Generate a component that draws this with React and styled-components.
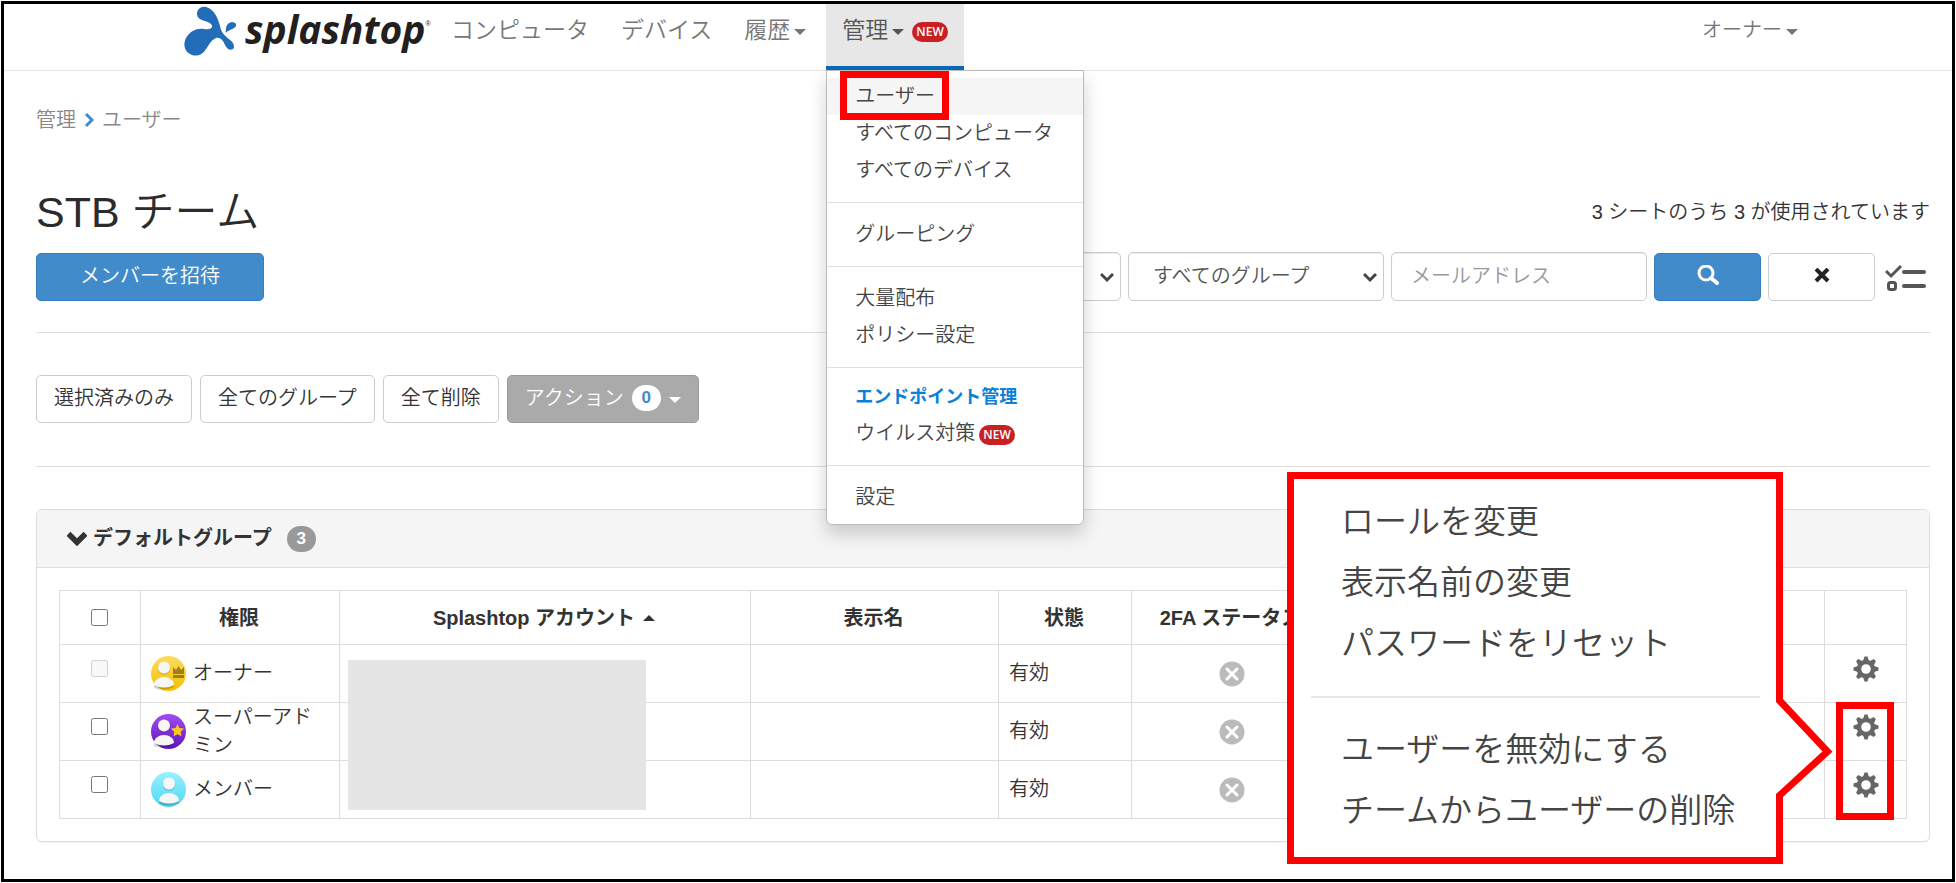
import React from 'react';
import styled, {createGlobalStyle, css} from 'styled-components';

const GlobalStyle = createGlobalStyle`
    *, *::before, *::after {
        box-sizing: border-box;
    }

    body {
        margin: 0;
        background: #fff;
        color: #333;
        font-family: "Liberation Sans", "Noto Sans CJK JP", sans-serif;
        font-size: 20px;
        font-weight: 350;
        line-height: 28px;
    }

    button, input, select {
        font: inherit;
        color: inherit;
    }
`;

const Page = styled.div`
    position: relative;
    display: flex;
    flex-direction: column;
    margin: 1px;
    min-height: calc(100vh - 2px);
    border: 3px solid #000;
`;

const Header = styled.header`
    display: flex;
    height: 67px;
    padding: 0 138px 0 180px;
    border-bottom: 1px solid #e7e7e7;
`;

const Logo = styled.a`
    display: flex;
    align-items: flex-start;
    padding-top: 2px;
    width: 251px;
    color: #231f20;
    text-decoration: none;
`;

const LogoMark = styled.svg`
    flex: none;
    width: 54px;
    height: 50px;
`;

const LogoText = styled.span`
    padding: 3px 0 0 7px;
    font-family: "Open Sans", sans-serif;
    font-size: 39px;
    font-style: italic;
    font-weight: 700;
    line-height: 40px;
`;

const LogoMarkSign = styled.sup`
    padding-top: 14px;
    font-size: 7px;
    line-height: 8px;
`;

const Nav = styled.nav`
    display: flex;
    flex: 1;
`;

const NavItem = styled.div`
    position: relative;
    display: flex;
    margin-left: ${props => props.$end ? 'auto' : props.$active ? '4px' : '0'};
`;

const NavLink = styled.a`
    display: flex;
    align-items: center;
    gap: 4px;
    padding: 0 16px 10px;
    border-bottom: 4px solid ${props => props.$active ? '#0d6ab7' : 'transparent'};
    background: ${props => props.$active ? '#e7e7e7' : 'transparent'};
    color: ${props => props.$active ? '#555' : '#777'};
    font-size: ${props => props.$small ? '20px' : '23px'};
    text-decoration: none;
    white-space: nowrap;
`;

const Caret = styled.span`
    width: 0;
    height: 0;
    margin-top: ${props => props.$up ? '0' : '4px'};
    border: 6px solid transparent;
    ${props => props.$up
        ? css`border-top: 0; border-bottom-color: currentColor;`
        : css`border-bottom: 0; border-top-color: currentColor;`}
`;

const NewBadge = styled.span`
    margin: 4px 0 0 4px;
    padding: 0 4px;
    border-radius: 10px;
    background: #c92026;
    color: #fff;
    font-family: "Open Sans", sans-serif;
    font-size: 12px;
    font-weight: 600;
    line-height: 20px;
`;

const Menu = styled.ul`
    position: absolute;
    top: 66px;
    left: 0;
    z-index: 2;
    width: 258px;
    margin: 0;
    padding: 7px 0 8px;
    border: 1px solid #bbb;
    border-radius: 0 0 6px 6px;
    background: #fff;
    box-shadow: 0 9px 18px rgba(0, 0, 0, 0.18);
    list-style: none;
`;

const MenuLink = styled.a`
    display: flex;
    align-items: center;
    height: ${props => props.$strong ? '34px' : '37px'};
    padding: 0 0 2px 28px;
    background: ${props => props.$active ? '#f5f5f5' : 'transparent'};
    color: ${props => props.$strong ? '#0a80d8' : '#444'};
    font-size: ${props => props.$strong ? '18px' : '20px'};
    font-weight: ${props => props.$strong ? '700' : '350'};
    text-decoration: none;
`;

const MenuDivider = styled.li`
    height: 1px;
    margin: 13px 0;
    background: #e0e0e0;
`;

const RedOutline = styled.span`
    position: absolute;
    border: 7px solid #f00;
    pointer-events: none;
`;

const MenuOutline = styled(RedOutline)`
    top: 0;
    left: 13px;
    width: 109px;
    height: 49px;
`;

const Main = styled.main`
    padding: 35px 22px 0 32px;
`;

const Breadcrumb = styled.nav`
    display: flex;
    align-items: center;
    gap: 8px;
    color: #888;

    a {
        color: inherit;
        text-decoration: none;
    }
`;

const TitleRow = styled.div`
    display: flex;
    align-items: center;
    justify-content: space-between;
    height: 64px;
    margin-top: 46px;
`;

const Title = styled.h1`
    margin: 0;
    color: #2b2b2b;
    font-size: 43px;
    font-weight: 350;
    line-height: 60px;
`;

const Toolbar = styled.div`
    display: flex;
    align-items: center;
    margin-top: 8px;
`;

const Filters = styled.form`
    display: flex;
    align-items: center;
    gap: 7px;
    margin-left: auto;
`;

const Button = styled.button`
    display: flex;
    align-items: center;
    justify-content: center;
    gap: 8px;
    width: ${props => props.$width || 'auto'};
    height: 48px;
    padding: 0 17px 2px;
    border: 1px solid #ccc;
    border-radius: 5px;
    background: #fff;
    color: #333;
    white-space: nowrap;

    ${props => props.$primary && css`
        border-color: #357ebd;
        background: #428bca;
        color: #fff;
    `}

    ${props => props.$muted && css`
        border-color: #999;
        background: #aaa;
        color: #fff;
    `}
`;

const SelectBox = styled.span`
    position: relative;
    display: flex;
    width: 256px;

    svg {
        position: absolute;
        top: 18px;
        right: 7px;
        pointer-events: none;
    }
`;

const field = css`
    width: 256px;
    height: 49px;
    padding: 0 19px 1px;
    border: 1px solid #ccc;
    border-radius: 5px;
    background: #fff;
    box-shadow: inset 0 1px 1px rgba(0, 0, 0, 0.08);
`;

const Select = styled.select`
    ${field}
    padding-left: 24px;
    color: #555;
    appearance: none;
`;

const TextInput = styled.input`
    ${field}

    &::placeholder {
        color: #999;
        opacity: 1;
    }
`;

const IconButton = styled.button`
    display: flex;
    padding: 4px 3px 0;
    border: 0;
    background: none;
    color: #555;
`;

const Rule = styled.hr`
    height: 1px;
    margin: ${props => props.$top} 0 0;
    border: 0;
    background: #ddd;
`;

const ActionRow = styled.div`
    display: flex;
    gap: 8px;
    margin-top: 42px;
`;

const Count = styled.span`
    display: inline-flex;
    align-items: center;
    justify-content: center;
    width: 29px;
    height: 26px;
    border-radius: 13px;
    background: ${props => props.$dark ? '#999' : '#fff'};
    color: ${props => props.$dark ? '#fff' : '#428bca'};
    font-size: 17px;
    font-weight: 700;
`;

const Panel = styled.section`
    position: relative;
    margin-top: 42px;
    border: 1px solid #ddd;
    border-radius: 6px;
    box-shadow: 0 1px 1px rgba(0, 0, 0, 0.05);
`;

const PanelHead = styled.h2`
    display: flex;
    align-items: center;
    gap: 6px;
    height: 58px;
    margin: 0;
    padding: 0 0 2px 30px;
    border-bottom: 1px solid #ddd;
    border-radius: 5px 5px 0 0;
    background: #f5f5f5;
    font-size: 20px;
    font-weight: 700;

    ${Count} {
        margin: 2px 0 0 9px;
    }
`;

const PanelBody = styled.div`
    padding: 22px;
`;

const Table = styled.table`
    width: 100%;
    border-collapse: collapse;
    table-layout: fixed;
`;

const Th = styled.th`
    height: 54px;
    padding: 0 2px 0 0;
    border: 1px solid #ddd;
    font-weight: 700;
    white-space: nowrap;
`;

const Td = styled.td`
    position: relative;
    height: 58px;
    padding: 0 10px;
    border: 1px solid #ddd;
    text-align: ${props => props.$center ? 'center' : 'left'};
`;

const CellText = styled.span`
    display: block;
    padding-bottom: 1px;
`;

const HeadLabel = styled.span`
    display: flex;
    align-items: center;
    justify-content: center;
    gap: 8px;
`;

const Checkbox = styled.input`
    display: block;
    width: 17px;
    height: 17px;
    margin: ${props => props.$head ? '0 auto' : '0 21px 11px'};
`;

const Role = styled.span`
    display: flex;
    align-items: center;
    gap: 7px;

    svg {
        flex: none;
    }
`;

const Redacted = styled.span`
    position: absolute;
    top: 15px;
    left: 8px;
    z-index: 1;
    width: 298px;
    height: 150px;
    background: #e5e5e5;
`;

const GearButton = styled.button`
    display: inline-flex;
    padding: 0 0 10px;
    border: 0;
    background: none;
    color: #666;
`;

const GearOutline = styled(RedOutline)`
    top: -1px;
    left: 11px;
    z-index: 1;
    width: 58px;
    height: 118px;
`;

const Callout = styled.div`
    position: absolute;
    top: -38px;
    right: 96px;
    z-index: 1;
    width: 546px;
    height: 392px;
    padding: 19px 73px 0 24px;
`;

const CalloutShape = styled.svg`
    position: absolute;
    top: 0;
    left: 0;
`;

const CalloutList = styled.ul`
    position: relative;
    margin: 0;
    padding: 0;
    list-style: none;
`;

const CalloutLink = styled.a`
    display: block;
    padding-left: 30px;
    color: #444;
    font-size: 33px;
    line-height: 61px;
    text-decoration: none;
    white-space: nowrap;
`;

const CalloutDivider = styled.li`
    height: 2px;
    margin: 22px 0 21px;
    background: #e5e5e5;
`;

const menuGroups = [
    [
        {label: 'ユーザー', active: true},
        {label: 'すべてのコンピュータ'},
        {label: 'すべてのデバイス'},
    ],
    [{label: 'グルーピング'}],
    [{label: '大量配布'}, {label: 'ポリシー設定'}],
    [
        {label: 'エンドポイント管理', strong: true},
        {label: 'ウイルス対策', isNew: true},
    ],
    [{label: '設定'}],
];

const calloutGroups = [
    ['ロールを変更', '表示名前の変更', 'パスワードをリセット'],
    ['ユーザーを無効にする', 'チームからユーザーの削除'],
];

const members = [
    {role: 'オーナー', kind: 'owner', disabled: true},
    {role: 'スーパーアドミン', kind: 'admin'},
    {role: 'メンバー', kind: 'member'},
];

const avatarColors = {
    owner: ['#fbdc62', '#f5c000'],
    admin: ['#a04df5', '#6015b8'],
    member: ['#9af0ff', '#4fd8f2'],
};

function SplashMark() {
    return (
        <LogoMark viewBox="0 0 54 50" aria-hidden="true">
            <path
                fill="#226db8"
                d="M13 8C13 3 17 0 22 1C30 3 34 12 36 20C37 26 40 29 46 34C50 37 51 41 49 43C46 45 43 43 41 39C39 34 36 31 32 32C27 34 25 39 22 43C18 50 11 51 6 48C0 45 -1 38 2 32C6 25 13 22 20 23C26 24 30 22 27 18C23 14 13 15 13 8Z"
            />
            <path fill="#226db8" d="M42 27C41 21 43 17 48 16C52 16 54 20 50 22C47 24 44 24 42 27Z"/>
        </LogoMark>
    );
}

function Avatar({kind}) {
    const [light, dark] = avatarColors[kind];
    const x = kind === 'member' ? 18 : 13;
    return (
        <svg width="35" height="35" viewBox="0 0 35 35" aria-hidden="true">
            <defs>
                <linearGradient id={`bg-${kind}`} x1="0" y1="0" x2="0" y2="1">
                    <stop offset="0" stopColor={light}/>
                    <stop offset="1" stopColor={dark}/>
                </linearGradient>
            </defs>
            <circle cx="17.5" cy="17.5" r="17.5" fill={`url(#bg-${kind})`}/>
            <path
                d={`M${x - 10} 32C${x - 10} 25 ${x - 6} 22 ${x} 22S${x + 10} 25 ${x + 10} 31Q${x} 36 ${x - 10} 32Z`}
                fill="#000"
                opacity="0.18"
            />
            <path
                d={`M${x - 10} 29C${x - 10} 24 ${x - 5} 21 ${x} 21S${x + 10} 24 ${x + 10} 29Q${x} 34 ${x - 10} 29Z`}
                fill="#f7f7f7"
            />
            <circle cx={x} cy="12.5" r="6.500" fill="#000" opacity="0.12"/>
            <circle cx={x} cy="11.5" r="6" fill="#f7f7f7"/>
            {kind === 'owner' && (
                <path d="M22 11L25 14L27.500 10L30 14L33 11V18H22ZM22 19H33V22H22Z" fill="#8a6a12" opacity="0.800"/>
            )}
            {kind === 'admin' && (
                <path
                    d="M26.500 10L28.400 14L33 14.600L29.700 17.800L30.500 22.300L26.500 20.200L22.500 22.300L23.300 17.800L20 14.600L24.600 14Z"
                    fill="#fcc61e"
                />
            )}
        </svg>
    );
}

function Chevron({size = 14, color = '#444', width = 3}) {
    return (
        <svg width={size} height={size} viewBox="0 0 14 14" aria-hidden="true">
            <path d="M1 4L7 10L13 4" fill="none" stroke={color} strokeWidth={width}/>
        </svg>
    );
}

function Separator() {
    return (
        <svg width="10" height="14" viewBox="0 0 10 14" aria-hidden="true">
            <path d="M2 1L8 7L2 13" fill="none" stroke="#428bca" strokeWidth="3"/>
        </svg>
    );
}

function GearIcon() {
    const teeth = [0, 45, 90, 135, 180, 225, 270, 315];
    return (
        <svg width="26" height="26" viewBox="0 0 26 26" fill="currentColor" aria-hidden="true">
            {teeth.map(angle => (
                <path key={angle} d="M10 5L11.500 0.500H14.500L16 5Z" transform={`rotate(${angle} 13 13)`}/>
            ))}
            <circle cx="13" cy="13" r="7" fill="none" stroke="currentColor" strokeWidth="4.400"/>
        </svg>
    );
}

function DisabledIcon() {
    return (
        <svg width="26" height="26" viewBox="0 0 26 26" role="img" aria-label="無効">
            <circle cx="13" cy="13" r="12.5" fill="#bbb"/>
            <path d="M8 8L18 18M18 8L8 18" stroke="#fff" strokeWidth="3" strokeLinecap="round"/>
        </svg>
    );
}

function AdminMenu() {
    return (
        <Menu>
            {menuGroups.map((group, i) => (
                <React.Fragment key={i}>
                    {i > 0 && <MenuDivider role="separator"/>}
                    {group.map(item => (
                        <li key={item.label}>
                            <MenuLink href="#" $active={item.active} $strong={item.strong}>
                                {item.label}
                                {item.isNew && <NewBadge>NEW</NewBadge>}
                            </MenuLink>
                        </li>
                    ))}
                </React.Fragment>
            ))}
            <MenuOutline as="li" aria-hidden="true"/>
        </Menu>
    );
}

function GearCallout() {
    return (
        <Callout>
            <CalloutShape width="546" height="392" viewBox="0 0 546 392" aria-hidden="true">
                <path
                    d="M3.500 3.500H492.500V228.500L540.500 279.500L492.500 323.500V388.500H3.500Z"
                    fill="#fff"
                    stroke="#f00"
                    strokeWidth="7"
                />
            </CalloutShape>
            <CalloutList>
                {calloutGroups.map((group, i) => (
                    <React.Fragment key={i}>
                        {i > 0 && <CalloutDivider role="separator"/>}
                        {group.map(label => (
                            <li key={label}><CalloutLink href="#">{label}</CalloutLink></li>
                        ))}
                    </React.Fragment>
                ))}
            </CalloutList>
        </Callout>
    );
}

function MemberTable() {
    return (
        <Table>
            <colgroup>
                <col style={{width: 81}}/>
                <col style={{width: 199}}/>
                <col style={{width: 411}}/>
                <col style={{width: 248}}/>
                <col style={{width: 133}}/>
                <col style={{width: 200}}/>
                <col/>
                <col style={{width: 82}}/>
            </colgroup>
            <thead>
                <tr>
                    <Th><Checkbox type="checkbox" aria-label="すべて選択" $head/></Th>
                    <Th>権限</Th>
                    <Th><HeadLabel>Splashtop アカウント<Caret $up/></HeadLabel></Th>
                    <Th>表示名</Th>
                    <Th>状態</Th>
                    <Th>2FA ステータス</Th>
                    <Th/>
                    <Th/>
                </tr>
            </thead>
            <tbody>
                {members.map(member => (
                    <tr key={member.kind}>
                        <Td><Checkbox type="checkbox" aria-label={member.role} disabled={member.disabled}/></Td>
                        <Td><Role><Avatar kind={member.kind}/><CellText>{member.role}</CellText></Role></Td>
                        <Td>{member.kind === 'owner' && <Redacted/>}</Td>
                        <Td/>
                        <Td><CellText>有効</CellText></Td>
                        <Td $center><HeadLabel><DisabledIcon/></HeadLabel></Td>
                        <Td/>
                        <Td $center>
                            <GearButton type="button" aria-label="設定"><GearIcon/></GearButton>
                            {member.kind === 'admin' && <GearOutline/>}
                        </Td>
                    </tr>
                ))}
            </tbody>
        </Table>
    );
}

function App() {
    return (
        <>
            <GlobalStyle/>
            <Page>
                <Header>
                    <Logo href="#">
                        <SplashMark/>
                        <LogoText>splashtop</LogoText>
                        <LogoMarkSign>®</LogoMarkSign>
                    </Logo>
                    <Nav>
                        <NavItem><NavLink href="#">コンピュータ</NavLink></NavItem>
                        <NavItem><NavLink href="#">デバイス</NavLink></NavItem>
                        <NavItem><NavLink href="#">履歴<Caret/></NavLink></NavItem>
                        <NavItem $active>
                            <NavLink href="#" $active>管理<Caret/><NewBadge>NEW</NewBadge></NavLink>
                            <AdminMenu/>
                        </NavItem>
                        <NavItem $end><NavLink href="#" $small>オーナー<Caret/></NavLink></NavItem>
                    </Nav>
                </Header>
                <Main>
                    <Breadcrumb>
                        <a href="#">管理</a>
                        <Separator/>
                        <a href="#">ユーザー</a>
                    </Breadcrumb>
                    <TitleRow>
                        <Title>STB チーム</Title>
                        <span>3 シートのうち 3 が使用されています</span>
                    </TitleRow>
                    <Toolbar>
                        <Button type="button" $primary $width="228px">メンバーを招待</Button>
                        <Filters>
                            <SelectBox>
                                <Select aria-label="権限"><option/></Select>
                                <Chevron/>
                            </SelectBox>
                            <SelectBox>
                                <Select aria-label="グループ"><option>すべてのグループ</option></Select>
                                <Chevron/>
                            </SelectBox>
                            <TextInput type="text" aria-label="メールアドレス" placeholder="メールアドレス"/>
                            <Button type="button" $primary $width="107px" aria-label="検索">
                                <svg width="22" height="22" viewBox="0 0 22 22" fill="none" stroke="#fff">
                                    <circle cx="9" cy="8" r="7" strokeWidth="3"/>
                                    <path d="M14 13L20 18" strokeWidth="4" strokeLinecap="round"/>
                                </svg>
                            </Button>
                            <Button type="button" $width="107px" aria-label="クリア">
                                <svg width="16" height="16" viewBox="0 0 16 16">
                                    <path d="M2 1L14 13M14 1L2 13" stroke="#222" strokeWidth="4"/>
                                </svg>
                            </Button>
                            <IconButton type="button" aria-label="列の選択">
                                <svg width="42" height="30" viewBox="0 0 42 30" fill="none" stroke="currentColor">
                                    <path d="M1 7L6 12L16 2" strokeWidth="3"/>
                                    <path d="M19 8H39M19 22H39" strokeWidth="4" strokeLinecap="round"/>
                                    <rect x="3.500" y="18.500" width="7" height="7" rx="2" strokeWidth="3"/>
                                </svg>
                            </IconButton>
                        </Filters>
                    </Toolbar>
                    <Rule $top="31px"/>
                    <ActionRow>
                        <Button type="button">選択済みのみ</Button>
                        <Button type="button">全てのグループ</Button>
                        <Button type="button">全て削除</Button>
                        <Button type="button" $muted>アクション<Count>0</Count><Caret/></Button>
                    </ActionRow>
                    <Rule $top="43px"/>
                    <Panel>
                        <PanelHead>
                            <Chevron size={20} color="#333" width={4}/>
                            デフォルトグループ
                            <Count $dark>3</Count>
                        </PanelHead>
                        <PanelBody>
                            <MemberTable/>
                        </PanelBody>
                        <GearCallout/>
                    </Panel>
                </Main>
            </Page>
        </>
    );
}

export default App;
